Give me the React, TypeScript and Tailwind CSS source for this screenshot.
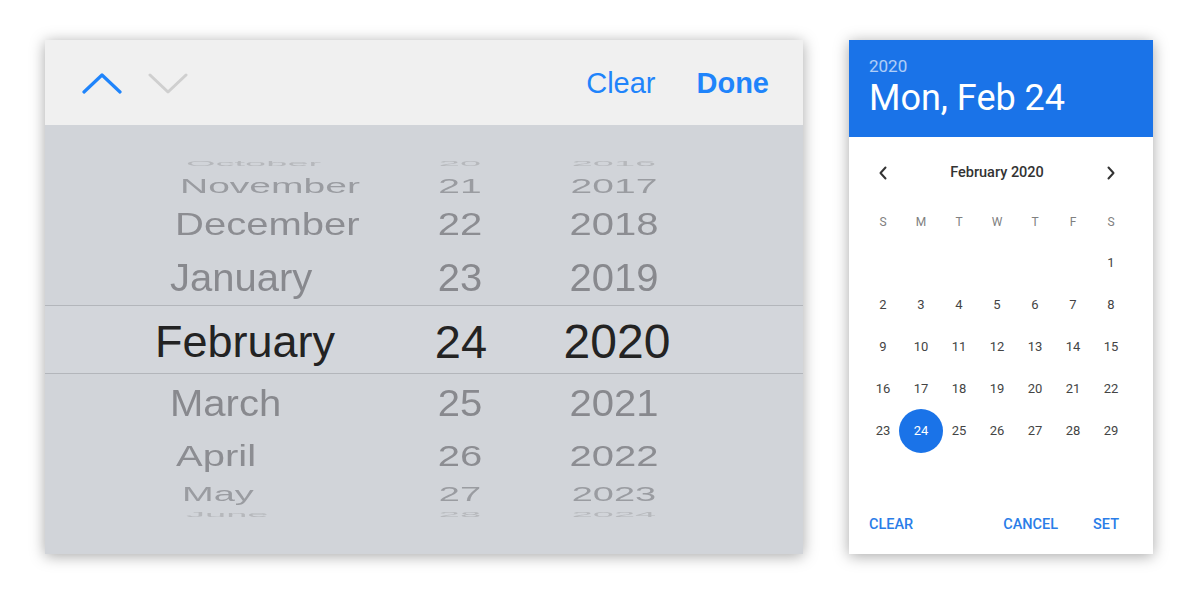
import React from "react";

type Row = { m: string; d: string; y: string; h: string; s: string; c: string; ml: string; fs: string };

const top: Row[] = [
  { m: "October", d: "20", y: "2016", h: "h-[20px]", s: "scale-y-[0.2]", c: "text-[#b6b8bc]", ml: "ml-[16px]", fs: "text-[38px]" },
  { m: "November", d: "21", y: "2017", h: "h-[26px]", s: "scale-y-[0.5]", c: "text-[#9a9ca1]", ml: "ml-[10px]", fs: "text-[39px]" },
  { m: "December", d: "22", y: "2018", h: "h-[50px]", s: "scale-y-[0.77]", c: "text-[#8c8d92]", ml: "ml-[5px]", fs: "text-[40px]" },
  { m: "January", d: "23", y: "2019", h: "h-[56px]", s: "scale-y-[0.97]", c: "text-[#88898e]", ml: "ml-[0px]", fs: "text-[40px]" },
];
const bottom: Row[] = [
  { m: "March", d: "25", y: "2021", h: "h-[58px]", s: "scale-y-[0.93]", c: "text-[#88898e]", ml: "ml-[0px]", fs: "text-[40px]" },
  { m: "April", d: "26", y: "2022", h: "h-[48px]", s: "scale-y-[0.74]", c: "text-[#8c8d92]", ml: "ml-[6px]", fs: "text-[40px]" },
  { m: "May", d: "27", y: "2023", h: "h-[28px]", s: "scale-y-[0.55]", c: "text-[#9a9ca1]", ml: "ml-[12px]", fs: "text-[38px]" },
  { m: "June", d: "28", y: "2024", h: "h-[12px]", s: "scale-y-[0.2]", c: "text-[#b6b8bc]", ml: "ml-[16px]", fs: "text-[38px]" },
];

function WheelRow({ r }: { r: Row }) {
  return (
    <div className={`${r.h} flex items-center overflow-visible ${r.c} blur-[0.4px]`}>
      <div className="w-[240px] pl-[125px] box-content flex">
        <span className={`${r.ml} ${r.fs} leading-none inline-block ${r.s}`}>{r.m}</span>
      </div>
      <div className="w-[100px] flex justify-center">
        <span className={`${r.fs} leading-none inline-block ${r.s}`}>{r.d}</span>
      </div>
      <div className="w-[208px] flex justify-center">
        <span className={`${r.fs} leading-none inline-block ${r.s}`}>{r.y}</span>
      </div>
    </div>
  );
}

function IosPicker() {
  return (
    <div
      className="w-[758px] h-[514px] flex flex-col shadow-[0_2px_14px_rgba(0,0,0,0.35)] overflow-hidden"
      style={{ fontFamily: '"Liberation Sans", Arial, sans-serif' }}
    >
      <div className="h-[85px] bg-[#f0f0f0] flex items-center pl-[37px] pr-[34px]">
        <svg width="40" height="22" viewBox="0 0 40 22" fill="none">
          <path d="M2 20 L20 3 L38 20" stroke="#1f84fb" strokeWidth="3.2" strokeLinecap="round" strokeLinejoin="round" />
        </svg>
        <svg width="40" height="22" viewBox="0 0 40 22" fill="none" className="ml-[26px]">
          <path d="M2 3 L20 20 L38 3" stroke="#cfcfcf" strokeWidth="3" strokeLinecap="round" strokeLinejoin="round" />
        </svg>
        <div className="flex-1" />
        <span className="text-[29px] text-[#1f84fb] leading-none mt-[2px]">Clear</span>
        <span className="text-[29px] font-bold text-[#1f84fb] leading-none ml-[41px] mt-[2px]">Done</span>
      </div>
      <div className="flex-1 bg-[#d1d4d9] flex flex-col pt-[28px]">
        {top.map((r) => (
          <WheelRow key={r.m} r={r} />
        ))}
        <div className="h-[69px] border-y border-[#b3b6bb] bg-[#d3d6db] flex items-center text-[#232323] pt-[4px]">
          <div className="w-[255px] pl-[110px] box-content flex">
            <span className="text-[45px] leading-none">February</span>
          </div>
          <div className="w-[100px] flex justify-center">
            <span className="text-[47px] leading-none ml-[2px]">24</span>
          </div>
          <div className="w-[214px] flex justify-center">
            <span className="text-[48px] leading-none">2020</span>
          </div>
        </div>
        {bottom.map((r) => (
          <WheelRow key={r.m} r={r} />
        ))}
      </div>
    </div>
  );
}

const days: (number | null)[] = [
  null, null, null, null, null, null, 1,
  2, 3, 4, 5, 6, 7, 8,
  9, 10, 11, 12, 13, 14, 15,
  16, 17, 18, 19, 20, 21, 22,
  23, 24, 25, 26, 27, 28, 29,
];

function AndroidPicker() {
  return (
    <div
      className="w-[304px] h-[514px] bg-white flex flex-col shadow-[0_2px_14px_rgba(0,0,0,0.35)]"
      style={{ fontFamily: "Roboto, 'Noto Sans', sans-serif" }}
    >
      <div className="h-[97px] bg-[#1a73e8] px-[20px] pt-[16px] flex flex-col">
        <span className="text-[17px] leading-[20px] text-white/65">2020</span>
        <span className="text-[36px] leading-[40px] text-white mt-[2px]">Mon, Feb 24</span>
      </div>
      <div className="pl-[15px] pr-[23px] flex flex-col">
        <div className="h-[38px] mt-[17px] flex items-center">
          <div className="w-[38px] flex justify-center">
            <svg width="10" height="14" viewBox="0 0 10 14" fill="none">
              <path d="M7.5 1.5 L2.5 7 L7.5 12.5" stroke="#333" strokeWidth="2" strokeLinecap="round" strokeLinejoin="round" />
            </svg>
          </div>
          <div className="flex-1 text-center text-[14.5px] font-medium text-[#333]">February 2020</div>
          <div className="w-[38px] flex justify-center">
            <svg width="10" height="14" viewBox="0 0 10 14" fill="none">
              <path d="M2.5 1.5 L7.5 7 L2.5 12.5" stroke="#333" strokeWidth="2" strokeLinecap="round" strokeLinejoin="round" />
            </svg>
          </div>
        </div>
        <div className="grid grid-cols-[repeat(7,38px)] h-[24px] items-center mt-[18px] text-[12px] text-[#808080]">
          {["S", "M", "T", "W", "T", "F", "S"].map((d, i) => (
            <div key={i} className="text-center">{d}</div>
          ))}
        </div>
        <div className="grid grid-cols-[repeat(7,38px)] auto-rows-[42px] mt-[8px] text-[13px] text-[#444]">
          {days.map((d, i) => (
            <div key={i} className="flex items-center justify-center">
              {d === 24 ? (
                <div className="w-[44px] h-[44px] rounded-full bg-[#1a73e8] text-white flex items-center justify-center shrink-0">
                  24
                </div>
              ) : (
                d ?? ""
              )}
            </div>
          ))}
        </div>
      </div>
      <div className="flex-1" />
      <div className="h-[20px] mb-[19px] flex items-center px-[20px] text-[14.5px] font-medium text-[#2a7de8]">
        <span>CLEAR</span>
        <div className="flex-1" />
        <span>CANCEL</span>
        <span className="ml-[35px] mr-[14px]">SET</span>
      </div>
    </div>
  );
}

export default function App() {
  return (
    <div className="w-[1200px] h-[600px] bg-white flex items-start pl-[45px] pt-[40px] gap-[46px]">
      <IosPicker />
      <AndroidPicker />
    </div>
  );
}
